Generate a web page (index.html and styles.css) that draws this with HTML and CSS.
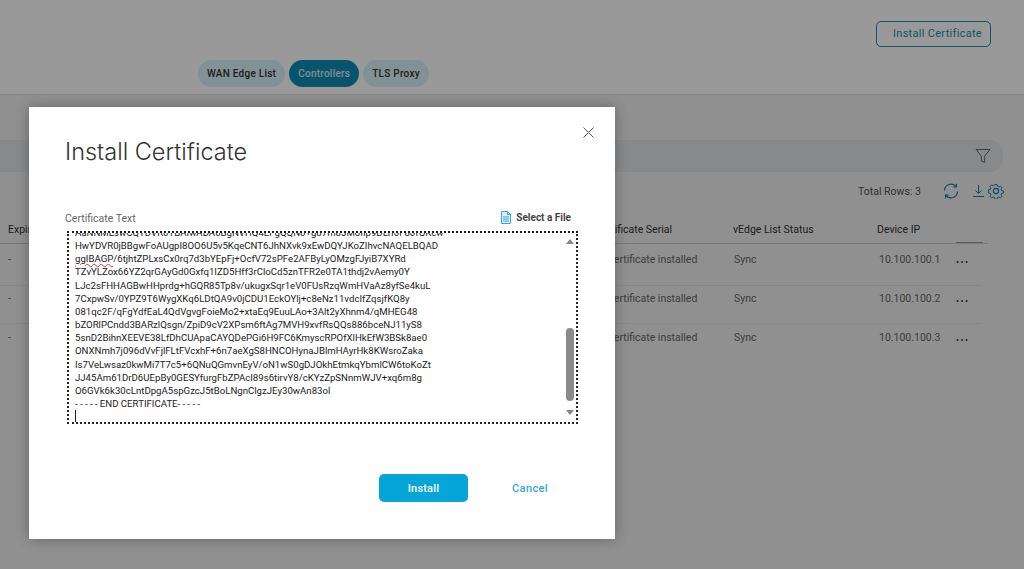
FILE: index.html
```html
<!DOCTYPE html>
<html lang="en">
<head>
<meta charset="utf-8">
<title>Install Certificate</title>
<link rel="stylesheet" href="styles.css">
</head>
<body>
<div class="page">
  <header class="top">
    <div class="top-actions"><button class="outline-btn">Install Certificate</button></div>
    <nav class="tabs">
      <span class="tab">WAN Edge List</span>
      <span class="tab active">Controllers</span>
      <span class="tab">TLS Proxy</span>
    </nav>
  </header>
  <main class="content">
    <div class="search">
      <svg class="filter" width="16" height="16" viewBox="0 0 16 16"><path d="M1 1.500h14L9.600 8.200v6.300l-3.200-1.500V8.200z" fill="none" stroke="#6a6a6a" stroke-width="1"/></svg>
    </div>
    <div class="tools">
      <span class="total">Total Rows: 3</span>
      <svg class="refresh" width="16" height="16" viewBox="0 0 16 16" fill="none" stroke="#0d7fa8" stroke-width="1.200"><path d="M1.500 7.500A6.500 6.500 0 0 1 13 3.500M14.500 8.500A6.500 6.500 0 0 1 3 12.500"/><path d="M13.500 .8v3.200h-3.200M2.500 15.200V12h3.200"/></svg>
      <svg class="download" width="11" height="12" viewBox="0 0 11 12" fill="none" stroke="#0d7fa8" stroke-width="1"><path d="M5.500 0v8M2.500 5.500l3 3 3-3M0 11.500h11"/></svg>
      <svg class="gear" width="16" height="16" viewBox="0 0 16 16" fill="none" stroke="#0d7fa8" stroke-width="1.100"><circle cx="8" cy="8" r="2.600"/><path d="M6.800.8h2.400l.4 2 1.500.7 1.800-1 1.700 1.700-1 1.800.7 1.500 1.900.4v2.400l-1.900.4-.7 1.500 1 1.800-1.700 1.700-1.800-1-1.500.7-.4 1.900H6.800l-.4-1.900-1.500-.7-1.800 1-1.700-1.700 1-1.800-.7-1.500-1.900-.4V6.600l1.900-.4.7-1.500-1-1.800 1.700-1.700 1.800 1 1.500-.7z" transform="translate(.8 .8) scale(.9)"/></svg>
    </div>
    <div class="row head">
      <span>Expiration Date</span><span>Certificate Serial</span><span>vEdge List Status</span><span>Device IP</span><span class="head-mark"></span>
    </div>
    <div class="row"><span>-</span><span>Certificate installed</span><span>Sync</span><span>10.100.100.1</span><span class="more">•••</span></div>
    <div class="row"><span>-</span><span>Certificate installed</span><span>Sync</span><span>10.100.100.2</span><span class="more">•••</span></div>
    <div class="row"><span>-</span><span>Certificate installed</span><span>Sync</span><span>10.100.100.3</span><span class="more">•••</span></div>
  </main>
</div>
<div class="overlay"></div>
<section class="modal">
  <button class="close" aria-label="Close"><svg width="11" height="11" viewBox="0 0 11 11"><path d="M.5.500l10 10M10.500.500l-10 10" stroke="#555" stroke-width="1" fill="none"/></svg></button>
  <h1 class="title">Install Certificate</h1>
  <div class="label-row">
    <span class="label">Certificate Text</span>
    <span class="select">
      <svg width="10" height="13" viewBox="0 0 10 13"><path d="M.5.500h6l3 3v9h-9z" fill="#dff2fb" stroke="#2fa9dc"/><path d="M2 6h6M2 8h6M2 10h6" stroke="#2fa9dc" stroke-width="1"/><path d="M6.500.500v3h3" fill="none" stroke="#2fa9dc"/></svg>
      Select a File
    </span>
  </div>
  <div class="cert">
    <div class="cert-text">
      <div>AaNNMEswCQYDVR0TBAIwADA0BgNVHQ4EFgQQN0+g87m83MoIIp9DLrI0F80fOKcw</div>
      <div>HwYDVR0jBBgwFoAUgpI8OO6U5v5KqeCNT6JhNXvk9xEwDQYJKoZIhvcNAQELBQAD</div>
      <div><span class="misspelt">ggIBAGP</span>/6tjhtZPLxsCx0rq7d3bYEpFj+OcfV72sPFe2AFByLyOMzgFJyiB7XYRd</div>
      <div>TZvYLZox66YZ2qrGAyGd0Gxfq1IZD5Hff3rCloCd5znTFR2e0TA1thdj2vAemy0Y</div>
      <div>LJc2sFHHAGBwHHprdg+hGQR85Tp8v/ukugxSqr1eV0FUsRzqWmHVaAz8yfSe4kuL</div>
      <div>7CxpwSv/0YPZ9T6WygXKq6LDtQA9v0jCDU1EckOYlj+c8eNz11vdcIfZqsjfKQ8y</div>
      <div>081qc2F/qFgYdfEaL4QdVgvgFoieMo2+xtaEq9EuuLAo+3Alt2yXhnm4/qMHEG48</div>
      <div>bZORlPCndd3BARzlQsgn/ZpiD9cV2XPsm6ftAg7MVH9xvfRsQQs886bceNJ11yS8</div>
      <div>5snD2BihnXEEVE38LfDhCUApaCAYQDePGi6H9FC6KmyscRPOfXlHkEfW3BSk8ae0</div>
      <div>ONXNmh7j096dVvFjlFLtFVcxhF+6n7aeXgS8HNCOHynaJBlmHAyrHk8KWsroZaka</div>
      <div>Is7VeLwsaz0kwMi7T7c5+6QNuQGmvnEyV/oN1wS0gDJOkhEtmkqYbmlCW6toKoZt</div>
      <div>JJ45Am61DrD6UEpBy0GESYfurgFbZPAcI89s6tirvY8/cKYzZpSNnmWJV+xq6m8g</div>
      <div>O6GVk6k30cLntDpgA5spGzcJ5tBoLNgnClgzJEy30wAn83ol</div>
      <div><span class="dashes">-----</span>END CERTIFICATE<span class="dashes">-----</span></div>
      <div class="caret-line"><i class="caret"></i></div>
    </div>
    <div class="scrollbar">
      <i class="arrow up"></i>
      <i class="thumb"></i>
      <i class="arrow down"></i>
    </div>
  </div>
  <div class="actions">
    <button class="primary">Install</button>
    <button class="link">Cancel</button>
  </div>
</section>
</body>
</html>
```
FILE: styles.css
```css
* { box-sizing: border-box; }
html, body { margin: 0; height: 569px; overflow: hidden; }
body { font-family: "Roboto", "Liberation Sans", sans-serif; background: #fff; color: #333; position: relative; }
button { font-family: inherit; }

.page { width: 1024px; height: 569px; display: flex; flex-direction: column; }
.top { height: 95px; background: #fff; border-bottom: 1px solid #ddd; padding: 21px 33px 0 198px; }
.top-actions { display: flex; justify-content: flex-end; height: 39px; }
.outline-btn { width: 115px; height: 26px; border: 1px solid #1a8cb0; border-radius: 5px; background: transparent; color: #1a8cb0; font-size: 11px; letter-spacing: .3px; padding: 0 0 2px 8px; }
.tabs { display: flex; gap: 4px; }
.tab { height: 27px; line-height: 27px; padding: 0 9px; border-radius: 14px; background: #d8f2fb; color: #333; font-size: 10px; font-weight: 500; letter-spacing: .25px; white-space: nowrap; }
.tab.active { background: #0f8db6; color: #d5eaf2; }

.content { flex: 1; background: #f0f0f0; padding-top: 45px; }
.search { height: 32px; width: 1003px; background: #e2e4e6; border-radius: 0 14px 14px 0; display: flex; align-items: center; justify-content: flex-end; padding-right: 12px; }
.tools { height: 38px; display: flex; align-items: center; padding: 0 20px 0 858px; font-size: 10.500px; color: #555; }
.total { width: 85px; white-space: nowrap; }
.refresh { margin-right: 14px; }
.download { margin-right: 4px; }
.row { display: grid; grid-template-columns: 587px 138px 144px 79px 1fr; align-items: start; height: 39px; padding: 7px 0 0 8px; font-size: 10.500px; line-height: 12px; color: #666; margin-right: 42px; border-bottom: 1px solid #e3e3e3; white-space: nowrap; }
.row:not(.head) > span:nth-child(2) { padding-left: 12px; }
.row:not(.head) > span:nth-child(3) { padding-left: 1px; }
.row:not(.head) > span:nth-child(4) { padding-left: 2px; }
.row:nth-child(4) { height: 42px; padding-top: 10px; }
.row:nth-child(5) { height: 38px; }
.row:nth-child(6) { padding-top: 8px; border-bottom: 0; }
.row.head { height: 34px; padding-top: 14px; color: #333; font-weight: 400; border-bottom: 1px solid #ccc; margin-right: 36px; }
.head-mark { height: 1px; width: 27px; background: #999; margin-top: 18px; }
.more { font-size: 9px; letter-spacing: 1.500px; color: #333; padding-top: 2px; }

.overlay { position: absolute; inset: 0; background: rgba(0,0,0,.4); }

.modal { position: absolute; left: 29px; top: 107px; width: 586px; height: 432px; background: #fff; box-shadow: 0 0 12px rgba(0,0,0,.3); padding: 31px 37px 0 36px; display: flex; flex-direction: column; }
.close { position: absolute; right: 21px; top: 20px; width: 11px; height: 11px; padding: 0; border: 0; background: none; display: block; line-height: 0; }
.title { margin: 0; font-family: "Inter", "Roboto", sans-serif; font-size: 23.500px; font-weight: 300; line-height: 28px; color: #333; }
.label-row { display: flex; justify-content: space-between; align-items: center; height: 16px; margin-top: 44px; padding-right: 7px; }
.label { font-size: 10.500px; color: #666; margin-top: 1px; }
.select { display: flex; align-items: center; gap: 5px; font-size: 10px; font-weight: 700; color: #444; margin-top: -1px; }
.cert { position: relative; margin: 5px 0 0 2px; width: 511px; height: 193px; border: 2px dotted #222; overflow: hidden; }
.cert-text { margin-top: -7px; padding-left: 6px; font-size: 9.650px; line-height: 13.150px; color: #222; white-space: nowrap; }
.misspelt { text-decoration: underline wavy #d33; text-decoration-thickness: 1px; text-underline-offset: 1px; }
.dashes { letter-spacing: 2.300px; }
.caret-line { height: 13px; }
.caret { display: block; width: 1px; height: 12px; background: #222; }
.scrollbar { position: absolute; right: 0; top: 0; bottom: 0; width: 13px; background: #fff; display: flex; flex-direction: column; align-items: center; }
.arrow { width: 0; height: 0; border-left: 4px solid transparent; border-right: 4px solid transparent; }
.arrow.up { border-bottom: 5px solid #888; margin-top: 6px; }
.arrow.down { border-top: 5px solid #888; margin-top: 9px; }
.thumb { width: 8px; height: 73px; background: #8a8a8a; border-radius: 4px; margin-top: 84px; }

.actions { display: flex; align-items: center; margin-top: 50px; padding-left: 314px; }
.primary { width: 89px; height: 28px; background: #05a5d8; color: #fff; border: 0; border-radius: 5px; font-size: 11px; font-weight: 500; padding: 0; letter-spacing: .2px; }
.link { margin-left: 44px; background: none; border: 0; padding: 0; color: #2fa9dc; font-size: 11px; font-weight: 500; letter-spacing: .4px; }
```
